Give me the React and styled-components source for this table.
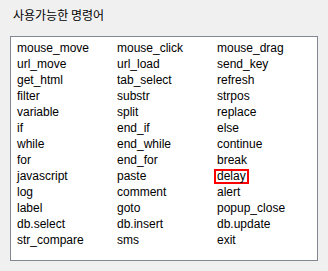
import React from 'react'
import styled, { createGlobalStyle } from 'styled-components'

const GlobalStyle = createGlobalStyle`
  html, body {
    margin: 0;
    padding: 0;
    background: #f0f0f0;
  }
  body {
    font-family: 'Liberation Sans', 'Noto Sans CJK KR', sans-serif;
    font-size: 12px;
    color: #000;
  }
`

// 명령어 목록 (행 단위)
const commands = [
  ['mouse_move', 'mouse_click', 'mouse_drag'],
  ['url_move', 'url_load', 'send_key'],
  ['get_html', 'tab_select', 'refresh'],
  ['filter', 'substr', 'strpos'],
  ['variable', 'split', 'replace'],
  ['if', 'end_if', 'else'],
  ['while', 'end_while', 'continue'],
  ['for', 'end_for', 'break'],
  ['javascript', 'paste', 'delay'],
  ['log', 'comment', 'alert'],
  ['label', 'goto', 'popup_close'],
  ['db.select', 'db.insert', 'db.update'],
  ['str_compare', 'sms', 'exit'],
]

const marked = 'delay'

const App = () => {
  return (
    <Container>
      <GlobalStyle />
      <Title>사용가능한 명령어</Title>
      <ListBox>
        {commands.flat().map((name) => (
          <Cell key={name}>
            {name === marked ? <Mark>{name}</Mark> : name}
          </Cell>
        ))}
      </ListBox>
    </Container>
  )
}

const Container = styled.div`
  width: 328px;
  height: 271px;
  padding: 7px 0 0 10px;
  box-sizing: border-box;
`

const Title = styled.div`
  font-family: 'Noto Sans CJK KR', sans-serif;
  font-size: 12px;
  line-height: 16px;
  padding-left: 3px;
`

const ListBox = styled.div`
  margin-top: 13px;
  width: 308px;
  height: 225px;
  box-sizing: border-box;
  border: 1px solid #828790;
  background: #fff;
  padding: 3px 0 0 6px;
  display: grid;
  grid-template-columns: repeat(3, 100px);
  grid-auto-rows: 16px;
`

const Cell = styled.div`
  line-height: 16px;
  white-space: nowrap;
`

// 빨간 테두리 강조
const Mark = styled.span`
  display: inline-block;
  line-height: 11px;
  padding: 0 1px;
  margin-left: -3px;
  border: 2px solid #f00;
`

export default App
